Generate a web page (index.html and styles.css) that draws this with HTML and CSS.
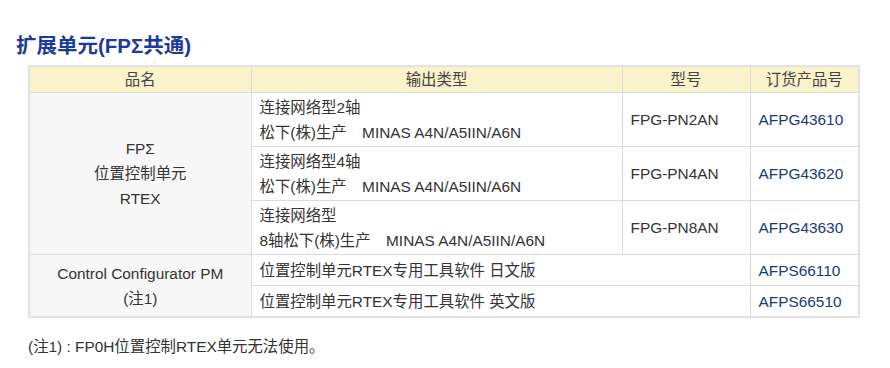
FILE: index.html
```html
<!DOCTYPE html>
<html lang="zh">
<head>
<meta charset="utf-8">
<link rel="stylesheet" href="styles.css">
</head>
<body>
<h2 class="title">扩展单元(FPΣ共通)</h2>
<table class="spec">
  <colgroup>
    <col class="c1"><col class="c2"><col class="c3"><col class="c4">
  </colgroup>
  <thead>
    <tr><th>品名</th><th>输出类型</th><th>型号</th><th>订货产品号</th></tr>
  </thead>
  <tbody>
    <tr class="tall">
      <td class="name" rowspan="3">FPΣ<br>位置控制单元<br>RTEX</td>
      <td>连接网络型2轴<br>松下(株)生产　MINAS A4N/A5IIN/A6N</td>
      <td>FPG-PN2AN</td>
      <td class="code">AFPG43610</td>
    </tr>
    <tr class="tall">
      <td>连接网络型4轴<br>松下(株)生产　MINAS A4N/A5IIN/A6N</td>
      <td>FPG-PN4AN</td>
      <td class="code">AFPG43620</td>
    </tr>
    <tr class="tall">
      <td>连接网络型<br>8轴松下(株)生产　MINAS A4N/A5IIN/A6N</td>
      <td>FPG-PN8AN</td>
      <td class="code">AFPG43630</td>
    </tr>
    <tr class="short">
      <td class="name" rowspan="2">Control Configurator PM<br>(注1)</td>
      <td colspan="2">位置控制单元RTEX专用工具软件 日文版</td>
      <td class="code">AFPS66110</td>
    </tr>
    <tr class="short">
      <td colspan="2">位置控制单元RTEX专用工具软件 英文版</td>
      <td class="code">AFPS66510</td>
    </tr>
  </tbody>
</table>
<p class="note">(注1) : FP0H位置控制RTEX单元无法使用。</p>
</body>
</html>
```
FILE: styles.css
```css
html, body {
  margin: 0;
  padding: 0;
  background: #fff;
}
body {
  font-family: "Liberation Sans", Arial, "Noto Sans CJK SC", sans-serif;
  font-size: 15.4px;
  color: #333;
  padding: 0 0 0 16px;
}
.title {
  margin: 0;
  padding-top: 34px;
  font-size: 20.5px;
  line-height: 24px;
  font-weight: bold;
  color: #1b3a9e;
}
.spec {
  margin: 7px 0 0 12px;
  border-collapse: collapse;
  table-layout: fixed;
  width: 830px;
  border: 2px solid #e2e2e2;
}
.c1 { width: 222px; }
.c2 { width: 371px; }
.c3 { width: 128px; }
.c4 { width: 109px; }
.spec th, .spec td {
  border: 1px solid #dcdcdc;
  padding: 0 8px;
  line-height: 25px;
  vertical-align: middle;
  text-align: left;
}
.spec th {
  background: #f8f3ca;
  font-weight: normal;
  color: #444;
  text-align: center;
  height: 24px;
}
.spec tr.tall td { height: 53px; }
.spec tr.short td { height: 30px; }
.spec td.name {
  background: #f7f7f7;
  text-align: center;
}
.spec td.code {
  color: #1a3a78;
}
.note {
  margin: 18px 0 0 12px;
  line-height: 22px;
}
```
